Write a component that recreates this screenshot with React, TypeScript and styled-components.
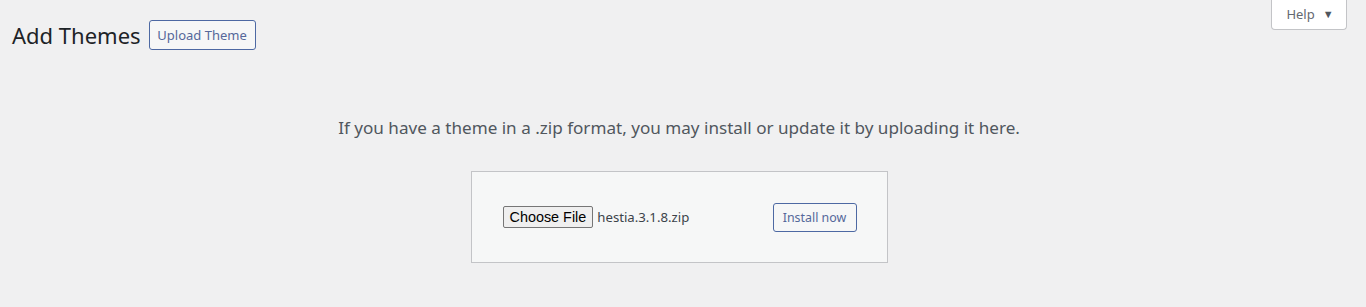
import React from "react";
import styled, { createGlobalStyle } from "styled-components";

const GlobalStyle = createGlobalStyle`
  html, body {
    margin: 0;
    padding: 0;
    background: #f0f0f1;
    font-family: "Noto Sans", "Open Sans", sans-serif;
    color: #1d2327;
  }
`;

const Wrap = styled.div`
  position: relative;
  min-height: 307px;
  padding: 0 20px 0 12px;
  box-sizing: border-box;
`;

const HelpTab = styled.button`
  position: absolute;
  top: 0;
  right: 19px;
  width: 76px;
  height: 30px;
  background: #fff;
  border: 1px solid #c3c4c7;
  border-top: none;
  border-radius: 0 0 4px 4px;
  color: #646970;
  font-family: inherit;
  font-size: 13px;
  display: flex;
  align-items: center;
  justify-content: center;
  gap: 8px;
  padding: 0 0 2px 2px;
`;

const Caret = styled.span`
  font-size: 11px;
  color: #50575e;
`;

const Header = styled.div`
  display: flex;
  align-items: center;
  gap: 8px;
  padding-top: 20px;
`;

const Title = styled.h1`
  margin: 0;
  font-size: 22px;
  font-weight: 400;
  line-height: 30px;
  color: #1d2327;
`;

const OutlineButton = styled.button<{ $w: number; $h: number; $fs?: number }>`
  width: ${(p) => p.$w}px;
  height: ${(p) => p.$h}px;
  box-sizing: border-box;
  background: #f6f7f7;
  border: 1px solid #4d69a3;
  border-radius: 3px;
  color: #55689a;
  font-family: inherit;
  font-size: ${(p) => p.$fs ?? 13}px;
  padding: 0;
  display: inline-flex;
  align-items: center;
  justify-content: center;
`;

const Help = styled.p`
  margin: 64px 0 30px;
  text-align: center;
  font-size: 17.1px;
  line-height: 27px;
  color: #50575e;
`;

const UploadForm = styled.form`
  width: 417px;
  height: 92px;
  box-sizing: border-box;
  margin: 0 auto;
  background: #f6f7f7;
  border: 1px solid #c3c4c7;
  padding: 0 30px 0 31px;
  display: flex;
  align-items: center;
  justify-content: space-between;
`;

const FilePicker = styled.div`
  display: flex;
  align-items: center;
  gap: 4px;
`;

const ChooseFile = styled.span`
  display: inline-flex;
  align-items: center;
  height: 22px;
  box-sizing: border-box;
  padding: 0 6px;
  background: #efefef;
  border: 1px solid #767676;
  border-radius: 2px;
  font-family: "Liberation Sans", Arial, sans-serif;
  font-size: 14.4px;
  color: #000;
`;

const FileName = styled.span`
  font-size: 13.2px;
  color: #3c434a;
`;

export default function App() {
  return (
    <>
      <GlobalStyle />
      <Wrap>
        <HelpTab type="button">
          Help <Caret>▼</Caret>
        </HelpTab>
        <Header>
          <Title>Add Themes</Title>
          <OutlineButton type="button" $w={107} $h={30}>
            Upload Theme
          </OutlineButton>
        </Header>
        <Help>
          If you have a theme in a .zip format, you may install or update it by uploading it here.
        </Help>
        <UploadForm onSubmit={(e) => e.preventDefault()}>
          <FilePicker>
            <ChooseFile>Choose File</ChooseFile>
            <FileName>hestia.3.1.8.zip</FileName>
          </FilePicker>
          <OutlineButton type="submit" $w={84} $h={29} $fs={12.4}>
            Install now
          </OutlineButton>
        </UploadForm>
      </Wrap>
    </>
  );
}
